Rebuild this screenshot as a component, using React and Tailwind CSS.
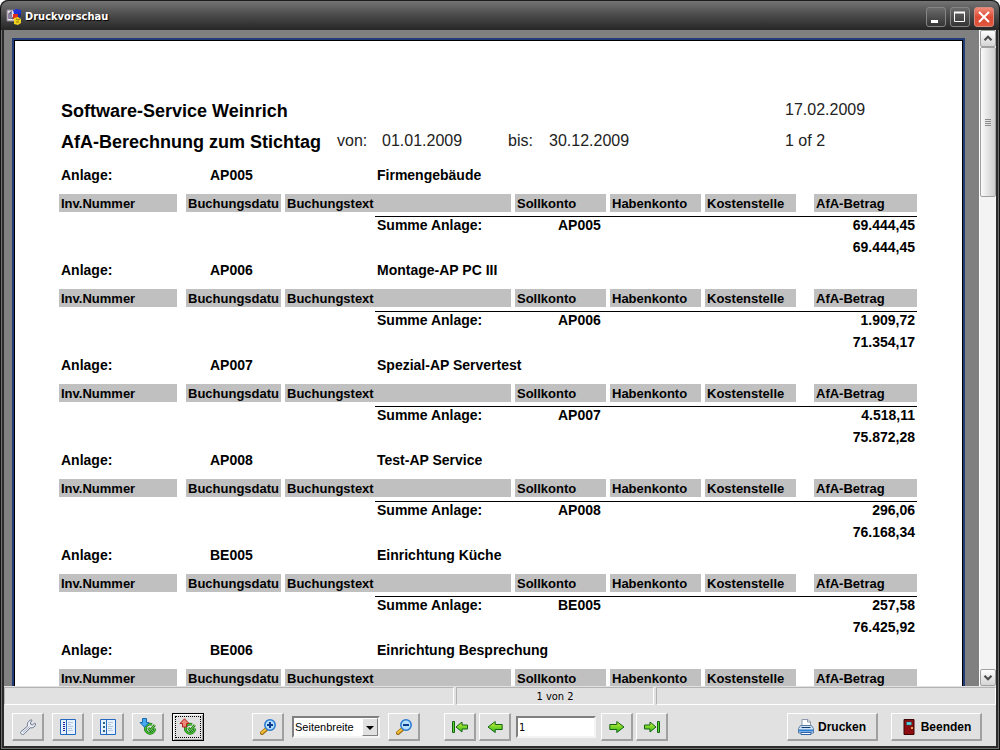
const anlagen = [
  { nr: 'AP005', name: 'Firmengebäude', betrag: '69.444,45', summe: '69.444,45' },
  { nr: 'AP006', name: 'Montage-AP PC III', betrag: '1.909,72', summe: '71.354,17' },
  { nr: 'AP007', name: 'Spezial-AP Servertest', betrag: '4.518,11', summe: '75.872,28' },
  { nr: 'AP008', name: 'Test-AP Service', betrag: '296,06', summe: '76.168,34' },
  { nr: 'BE005', name: 'Einrichtung Küche', betrag: '257,58', summe: '76.425,92' },
  { nr: 'BE006', name: 'Einrichtung Besprechung' },
];

export default function App() {
  return (
    <div className="h-screen flex flex-col overflow-hidden rounded-t-lg border-x border-b border-[#111] bg-[#2b2b2b] font-['Liberation_Sans',Arial,sans-serif] text-black">
      <TitleBar />
      <div className="flex-1 min-h-0 flex border-x border-b border-[#707070] px-[2px] pb-[2px]">
        <main className="flex-1 min-w-0 flex flex-col bg-[#e1e1e1]">
          <div className="flex-1 min-h-0 flex bg-[#808080]">
            <div className="flex-1 min-w-0 overflow-hidden pt-2 pl-2 pr-[14px]">
              <ReportPage />
            </div>
            <ScrollBar />
          </div>
          <StatusBar />
          <Toolbar />
        </main>
      </div>
    </div>
  );
}

function TitleBar() {
  return (
    <header className="h-[30px] shrink-0 flex items-center gap-[3px] px-[5px] pt-[2px] rounded-t-lg border-t border-[#1c1c1c] bg-linear-to-b from-[#747474] via-[#4a4a4a] to-[#262626]">
      <AppIcon />
      <h1 className="flex-1 pt-[2px] text-[11px] font-bold text-white font-['DejaVu_Sans_Condensed','DejaVu_Sans',sans-serif] [text-shadow:1px_1px_1px_#000]">
        Druckvorschau
      </h1>
      <div className="flex gap-1">
        <WindowButton label="Minimieren">
          <rect x="4" y="12" width="7" height="3" fill="#fff" />
        </WindowButton>
        <WindowButton label="Maximieren">
          <path d="M3.500 4.500h10v9h-10z" fill="none" stroke="#fff" />
          <path d="M3 4.500h11" stroke="#fff" strokeWidth="2" />
        </WindowButton>
        <WindowButton label="Schließen" close>
          <path d="M4 4l10 10M14 4L4 14" stroke="#fff" strokeWidth="2" />
        </WindowButton>
      </div>
    </header>
  );
}

function WindowButton({ label, close, children }) {
  const tone = close
    ? 'bg-linear-to-b from-[#f08a78] via-[#dc4a34] to-[#e0563c] border-[#d98a80]'
    : 'bg-linear-to-b from-[#6c6c6c] to-[#343434] border-[#858585]';
  return (
    <button type="button" aria-label={label} className={`size-5 rounded-[3px] border ${tone}`}>
      <svg viewBox="0 0 18 18" className="size-full">{children}</svg>
    </button>
  );
}

function ReportPage() {
  return (
    <article className="border-2 border-[#233c78] bg-white">
      <div className="border border-black pl-[44px] pr-[45px] pt-[59px] h-[1200px]">
        <header className="grid grid-cols-[276px_45px_126px_41px_1fr_132px] gap-y-[9px] pl-[2px] text-base leading-5 text-[#222]">
          <h2 className="col-span-5 pt-px text-lg leading-[21px] font-bold text-black">Software-Service Weinrich</h2>
          <span>17.02.2009</span>
          <h3 className="pt-px text-lg leading-[21px] font-bold text-black whitespace-nowrap">AfA-Berechnung zum Stichtag</h3>
          <span>von:</span>
          <span>01.01.2009</span>
          <span>bis:</span>
          <span>30.12.2009</span>
          <span>1 of 2</span>
        </header>
        <table className="mt-[14px] w-full table-fixed border-collapse text-sm leading-4 font-bold">
          <colgroup>
            <col className="w-[127px]" />
            <col className="w-[99px]" />
            <col className="w-[90px]" />
            <col />
            <col className="w-[95px]" />
            <col className="w-[95px]" />
            <col className="w-[109px]" />
            <col className="w-[103px]" />
          </colgroup>
          {anlagen.map((anlage) => (
            <AnlageGroup key={anlage.nr} {...anlage} />
          ))}
        </table>
      </div>
    </article>
  );
}

function AnlageGroup({ nr, name, betrag, summe }) {
  return (
    <tbody className="align-top">
      <tr className="h-[27px]">
        <td className="pl-[2px]">Anlage:</td>
        <td className="pl-6">{nr}</td>
        <td />
        <td colSpan={5} className="pl-[2px]">{name}</td>
      </tr>
      <tr className="h-[22px]">
        <HeadCell className="pr-[9px]">Inv.Nummer</HeadCell>
        <HeadCell className="pr-1">Buchungsdatu</HeadCell>
        <HeadCell className="pr-1" colSpan={2}>Buchungstext</HeadCell>
        <HeadCell className="pr-1">Sollkonto</HeadCell>
        <HeadCell className="pr-1">Habenkonto</HeadCell>
        <HeadCell className="pr-[18px]">Kostenstelle</HeadCell>
        <HeadCell>AfA-Betrag</HeadCell>
      </tr>
      {betrag && (
        <>
          <tr className="h-[21px]">
            <td colSpan={3} />
            <td className="border-t border-black pl-[2px]">Summe Anlage:</td>
            <td className="border-t border-black pl-[43px]">{nr}</td>
            <td className="border-t border-black" colSpan={2} />
            <td className="border-t border-black pr-[2px] text-right">{betrag}</td>
          </tr>
          <tr className="h-[25px]">
            <td colSpan={7} />
            <td className="pt-[2px] pr-[2px] text-right">{summe}</td>
          </tr>
        </>
      )}
    </tbody>
  );
}

function HeadCell({ className, colSpan, children }) {
  return (
    <th scope="col" colSpan={colSpan} className={className}>
      <div className="h-[18px] bg-[#c0c0c0] pl-[2px] pt-px text-left text-[13px] leading-[18px] whitespace-nowrap overflow-hidden">
        {children}
      </div>
    </th>
  );
}

function ScrollBar() {
  return (
    <div className="w-[17px] shrink-0 flex flex-col bg-[#f3f3f3] border-l border-white">
      <ScrollButton label="Nach oben" path="M4 10l4-4 4 4" />
      <div className="h-[150px] rounded-[2px] border border-[#a0a0a0] bg-linear-to-r from-[#fafafa] to-[#cdcdcd] flex flex-col items-center justify-center gap-px">
        <i className="h-px w-[6px] bg-[#8a8a8a]" />
        <i className="h-px w-[6px] bg-[#8a8a8a]" />
        <i className="h-px w-[6px] bg-[#8a8a8a]" />
        <i className="h-px w-[6px] bg-[#8a8a8a]" />
      </div>
      <div className="flex-1" />
      <ScrollButton label="Nach unten" path="M4 6l4 4 4-4" />
    </div>
  );
}

function ScrollButton({ label, path }) {
  return (
    <button
      type="button"
      aria-label={label}
      className="h-[17px] shrink-0 rounded-[2px] border border-[#a0a0a0] bg-linear-to-b from-white to-[#d4d4d4]"
    >
      <svg viewBox="0 0 16 16" className="size-full">
        <path d={path} fill="none" stroke="#4d4d4d" strokeWidth="2.500" />
      </svg>
    </button>
  );
}

function StatusBar() {
  const panel = 'h-[18px] border border-t-[#b4b4b4] border-l-[#b4b4b4] border-r-white border-b-white';
  return (
    <div className="shrink-0 h-5 pt-px flex gap-[2px] text-[11px] leading-[18px] font-['DejaVu_Sans_Condensed','DejaVu_Sans',sans-serif]">
      <div className={`${panel} w-[450px]`} />
      <div className={`${panel} w-[198px] text-center`}>1 von 2</div>
      <div className={`${panel} flex-1`} />
    </div>
  );
}

function Toolbar() {
  return (
    <div className="shrink-0 h-10 flex items-center pl-2 pr-[14px] pb-[2px] pt-[4px]">
      <div className="flex gap-2">
        <ToolButton label="Einstellungen"><WrenchIcon /></ToolButton>
        <ToolButton label="Gliederung"><ListIcon /></ToolButton>
        <ToolButton label="Miniaturen"><ListIcon wide /></ToolButton>
        <ToolButton label="Laden"><CheckIcon /></ToolButton>
        <ToolButton label="Speichern" focused><CheckIcon up /></ToolButton>
      </div>
      <div className="ml-12 flex items-center gap-2">
        <ToolButton label="Vergrößern"><ZoomIcon plus /></ToolButton>
        <div className="relative">
          <select
            aria-label="Zoom"
            defaultValue="Seitenbreite"
            className="block w-[88px] h-[22px] appearance-none bg-white border-2 border-t-[#808080] border-l-[#808080] border-r-[#f4f4f4] border-b-[#f4f4f4] pl-px text-[11px]"
          >
            <option>Seitenbreite</option>
            <option>Ganze Seite</option>
            <option>100%</option>
          </select>
          <span className="absolute top-[2px] right-[2px] w-4 h-[18px] pointer-events-none bg-[#e1e1e1] border border-t-white border-l-white border-r-[#808080] border-b-[#808080]">
            <svg viewBox="0 0 14 16" className="size-full">
              <path d="M3 7h8l-4 4z" fill="#000" />
            </svg>
          </span>
        </div>
        <ToolButton label="Verkleinern"><ZoomIcon /></ToolButton>
      </div>
      <div className="ml-6 flex items-center gap-[3px]">
        <ToolButton label="Erste Seite"><ArrowIcon bar flip /></ToolButton>
        <ToolButton label="Vorige Seite"><ArrowIcon flip /></ToolButton>
        <input
          aria-label="Seite"
          defaultValue="1"
          className="w-20 h-[22px] mx-[2px] px-px bg-white border-2 border-t-[#808080] border-l-[#808080] border-r-[#f4f4f4] border-b-[#f4f4f4] text-[11px] font-['DejaVu_Sans_Condensed','DejaVu_Sans',sans-serif]"
        />
        <ToolButton label="Nächste Seite"><ArrowIcon /></ToolButton>
        <ToolButton label="Letzte Seite"><ArrowIcon bar /></ToolButton>
      </div>
      <div className="ml-auto flex gap-[13px]">
        <TextButton icon={<PrinterIcon />}>Drucken</TextButton>
        <TextButton icon={<DoorIcon />}>Beenden</TextButton>
      </div>
    </div>
  );
}

function ToolButton({ label, focused, children }) {
  const frame = focused
    ? 'border border-black shadow-[inset_1px_1px_0_#fff,inset_-1px_-1px_0_#a0a0a0] outline-1 outline-dotted outline-black -outline-offset-4'
    : 'border-t border-l border-r-2 border-b-2 border-t-white border-l-white border-r-[#a0a0a0] border-b-[#a0a0a0]';
  return (
    <button type="button" aria-label={label} className={`w-8 h-7 flex items-center justify-center bg-[#e1e1e1] ${frame}`}>
      {children}
    </button>
  );
}

function TextButton({ icon, children }) {
  return (
    <button
      type="button"
      className="w-[91px] h-7 flex items-center justify-center gap-1 bg-[#e1e1e1] border-t border-l border-r-2 border-b-2 border-t-white border-l-white border-r-[#a0a0a0] border-b-[#a0a0a0] text-xs font-bold"
    >
      {icon}
      {children}
    </button>
  );
}

function AppIcon() {
  return (
    <svg viewBox="0 0 16 16" className="size-4">
      <path d="M1 1h8v11H1z" fill="#e4e0e4" stroke="#8c8590" />
      <path d="M3 10V5l2-2v7M6 10l3-4" fill="none" stroke="#6c5f86" strokeWidth="1.500" />
      <path d="M7 1l4-1 4 1v4H8z" fill="#2233d8" />
      <path d="M7 5h5v5H7z" fill="#e02c1c" />
      <path d="M12 4l3 1-1 4h-2z" fill="#1c2c9c" />
      <path d="M8 9l4-1 3 2v4l-3 2-4-1z" fill="#f2d21c" />
      <path d="M10 10l2 1 2-1M10 13h3" fill="none" stroke="#8e7410" />
    </svg>
  );
}

function WrenchIcon() {
  return (
    <svg viewBox="0 0 16 16" className="size-4">
      <path
        d="M.8 12.800L7.600 7c-.8-2.400.4-5.200 3.600-6.200l.8.600-1.600 2.400.4 1.600 1.800.4 2.200-1.800.8.800c-.4 3-2.600 4.600-5.400 4L4 15.200c-.8.600-2 .5-2.700-.2s-1-1.500-.5-2.200z"
        fill="#eceff4"
        stroke="#6c7890"
      />
      <path d="M3 13.500L9.500 7.500" stroke="#a4aec0" />
    </svg>
  );
}

function ListIcon({ wide }) {
  return (
    <svg viewBox="0 0 16 16" className="size-4">
      <path d="M.5.5h15v15H.5z" fill="#e8f2fc" stroke="#2468c0" />
      <path d="M6.500.5v15" stroke="#2468c0" />
      <path
        d={wide ? 'M4 3v2M4 7v2M4 11v2' : 'M4 3v1M4 5v1M4 7v1M4 9v1M4 11v1'}
        stroke={wide ? '#246890' : '#1c1c9c'}
        strokeWidth="2"
      />
      <path d="M8 3.500h5M8 5.500h3M8 7.500h5M8 9.500h4M8 11.500h5" stroke="#b4c6dc" />
    </svg>
  );
}

function CheckIcon({ up }) {
  const ring = 'M12 5.600A4.600 4.600 0 1 0 14.600 9.500';
  const tick = 'M8.200 8.800l2.200 2.600L14.800 6';
  return (
    <svg viewBox="0 0 16 16" className="size-4 overflow-visible">
      <g fill="none">
        <path d={ring} stroke="#1c7a18" strokeWidth="2.800" />
        <path d={ring} stroke="#4cc434" strokeWidth="1.200" />
        <path d={tick} stroke="#1c7a18" strokeWidth="2.600" />
        <path d={tick} stroke="#84e05c" strokeWidth="1" />
      </g>
      {up ? (
        <path d="M4.500-.2L9 4.500H6.500v3.500h-4V4.500H0z" fill="#f08878" stroke="#b4201c" />
      ) : (
        <path d="M2.500-.5h4V3.500H9L4.500 8.200 0 3.500h2.500z" fill="#48a8f0" stroke="#1868b8" />
      )}
    </svg>
  );
}

function ZoomIcon({ plus }) {
  return (
    <svg viewBox="0 0 16 16" className="size-4">
      <path d="M2 14L6 10.500" stroke="#946410" strokeWidth="4" strokeLinecap="round" />
      <path d="M2 13.700L6 10.200" stroke="#f0bc30" strokeWidth="2.400" strokeLinecap="round" />
      <circle cx="10" cy="6" r="5.200" fill="#b4e0fc" stroke="#2878d0" strokeWidth="1.500" />
      <path d="M7 6h6" stroke="#0c3c90" strokeWidth="2" />
      {plus && <path d="M10 3v6" stroke="#0c3c90" strokeWidth="2" />}
    </svg>
  );
}

function ArrowIcon({ bar, flip }) {
  return (
    <svg viewBox="0 0 16 16" className={flip ? 'size-4 -scale-x-100' : 'size-4'}>
      <defs>
        <linearGradient id="pfeil" x1="0" y1="0" x2="0" y2="1">
          <stop offset="0" stopColor="#d4f03c" />
          <stop offset="1" stopColor="#28bc18" />
        </linearGradient>
      </defs>
      {bar ? (
        <>
          <path d="M.5 6H6V3L12 8 6 13V10H.5z" fill="url(#pfeil)" stroke="#146414" />
          <path d="M13.500 2.500h2v11h-2z" fill="#58d428" stroke="#146414" />
        </>
      ) : (
        <path d="M.8 5.500h7V2.500L15 8l-7.200 5.500v-3h-7z" fill="url(#pfeil)" stroke="#146414" />
      )}
    </svg>
  );
}

function PrinterIcon() {
  return (
    <svg viewBox="0 0 16 16" className="size-4">
      <path d="M4 8V.5h6L12.500 3v5z" fill="#fff" stroke="#8c98ac" />
      <path d="M9.500.5V3h3" fill="none" stroke="#8c98ac" />
      <path d="M2.500 6.500h11l2 3v4.500H.5V9.500z" fill="#cfe2f4" stroke="#5c7ca8" />
      <path d="M3.500 8.500h9" stroke="#143c70" />
      <path d="M1 11.500h14" stroke="#2c7cd4" strokeWidth="2" />
      <path d="M3 13.500h10v2H3z" fill="#fff" stroke="#2c62a8" />
    </svg>
  );
}

function DoorIcon() {
  return (
    <svg viewBox="0 0 16 16" className="size-4">
      <path d="M3 .5h10v15H3z" fill="#8c0c10" stroke="#3c0404" />
      <path d="M5.500 3h5v3h-5z" fill="#5cd8e0" stroke="#1c5c60" strokeWidth=".5" />
      <circle cx="11" cy="9" r="1" fill="#f0e070" />
    </svg>
  );
}
